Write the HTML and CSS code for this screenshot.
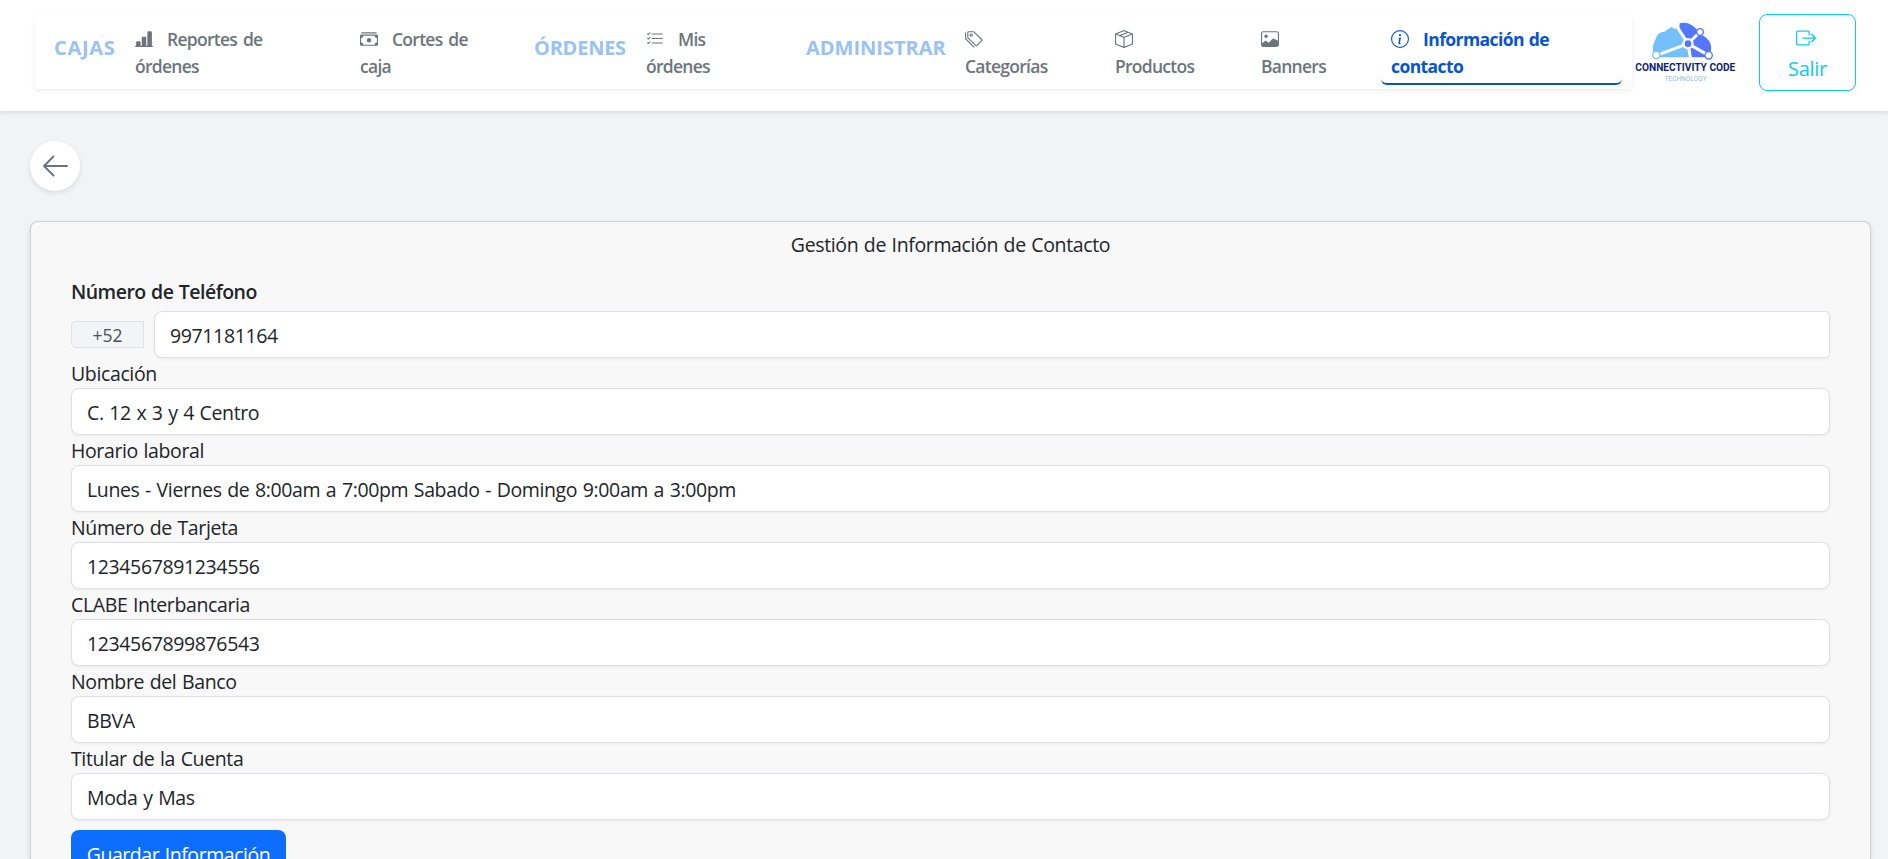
FILE: index.html
```html
<!DOCTYPE html>
<html lang="es">
<head>
<meta charset="utf-8">
<title>Información de contacto</title>
<link rel="stylesheet" href="styles.css">
</head>
<body>
<header class="topbar">
  <nav class="menu">
    <span class="section s-cajas">CAJAS</span>
    <a class="link"><svg class="ico" viewBox="0 0 16 16"><path d="M11 2a1 1 0 0 1 1-1h2a1 1 0 0 1 1 1v12h.5a.5.5 0 0 1 0 1H.5a.5.5 0 0 1 0-1H1v-3a1 1 0 0 1 1-1h2a1 1 0 0 1 1 1v3h1V7a1 1 0 0 1 1-1h2a1 1 0 0 1 1 1v7h1z"/></svg><span>Reportes de</span><br><span>órdenes</span></a>
    <a class="link"><svg class="ico" viewBox="0 0 16 16"><path d="M1 3a1 1 0 0 1 1-1h12a1 1 0 0 1 1 1zm7 8a2 2 0 1 0 0-4 2 2 0 0 0 0 4"/><path d="M0 5a1 1 0 0 1 1-1h14a1 1 0 0 1 1 1v8a1 1 0 0 1-1 1H1a1 1 0 0 1-1-1zm3 0a2 2 0 0 1-2 2v4a2 2 0 0 1 2 2h10a2 2 0 0 1 2-2V7a2 2 0 0 1-2-2z"/></svg><span>Cortes de</span><br><span>caja</span></a>
    <span class="section s-ordenes">ÓRDENES</span>
    <a class="link"><svg class="ico" viewBox="0 0 16 16"><path d="M5 11.5a.5.5 0 0 1 .5-.5h9a.5.5 0 0 1 0 1h-9a.5.5 0 0 1-.5-.5m0-4a.5.5 0 0 1 .5-.5h9a.5.5 0 0 1 0 1h-9a.5.5 0 0 1-.5-.5m0-4a.5.5 0 0 1 .5-.5h9a.5.5 0 0 1 0 1h-9a.5.5 0 0 1-.5-.5M3.854 2.146a.5.5 0 0 1 0 .708l-1.5 1.5a.5.5 0 0 1-.708 0l-.5-.5a.5.5 0 1 1 .708-.708L2 3.293l1.146-1.147a.5.5 0 0 1 .708 0m0 4a.5.5 0 0 1 0 .708l-1.5 1.5a.5.5 0 0 1-.708 0l-.5-.5a.5.5 0 1 1 .708-.708L2 7.293l1.146-1.147a.5.5 0 0 1 .708 0m0 4a.5.5 0 0 1 0 .708l-1.5 1.5a.5.5 0 0 1-.708 0l-.5-.5a.5.5 0 0 1 .708-.708l.146.147 1.146-1.147a.5.5 0 0 1 .708 0"/></svg><span>Mis</span><br><span>órdenes</span></a>
    <span class="section s-admin">ADMINISTRAR</span>
    <a class="link"><svg class="ico" viewBox="0 0 16 16"><path d="M3 2v4.586l7 7L14.586 9l-7-7zM2 2a1 1 0 0 1 1-1h4.586a1 1 0 0 1 .707.293l7 7a1 1 0 0 1 0 1.414l-4.586 4.586a1 1 0 0 1-1.414 0l-7-7A1 1 0 0 1 2 6.586z"/><path d="M5.5 5a.5.5 0 1 1 0-1 .5.5 0 0 1 0 1m0 1a1.5 1.5 0 1 0 0-3 1.5 1.5 0 0 0 0 3M1 7.086a1 1 0 0 0 .293.707L8.75 15.25l-.043.043a1 1 0 0 1-1.414 0l-7-7A1 1 0 0 1 0 7.586V3a1 1 0 0 1 1-1z"/></svg><br><span>Categorías</span></a>
    <a class="link"><svg class="ico" viewBox="0 0 16 16"><path d="M8.186 1.113a.5.5 0 0 0-.372 0L1.846 3.5l2.404.961L10.404 2zm3.564 1.426L5.596 5 8 5.961 14.154 3.5zm3.25 1.7-6.5 2.6v7.922l6.5-2.6V4.24zM7.5 14.762V6.838L1 4.239v7.923zM7.443.184a1.5 1.5 0 0 1 1.114 0l7.129 2.852A.5.5 0 0 1 16 3.5v8.662a1 1 0 0 1-.629.928l-7.185 2.874a.5.5 0 0 1-.372 0L.63 13.09a1 1 0 0 1-.63-.928V3.5a.5.5 0 0 1 .314-.464z"/></svg><br><span>Productos</span></a>
    <a class="link"><svg class="ico" viewBox="0 0 16 16"><path d="M6.002 5.5a1.5 1.5 0 1 1-3 0 1.5 1.5 0 0 1 3 0"/><path d="M2.002 1a2 2 0 0 0-2 2v10a2 2 0 0 0 2 2h12a2 2 0 0 0 2-2V3a2 2 0 0 0-2-2zm12 1a1 1 0 0 1 1 1v6.5l-3.777-1.947a.5.5 0 0 0-.577.093l-3.71 3.71-2.66-1.772a.5.5 0 0 0-.63.062L1.002 12V3a1 1 0 0 1 1-1z"/></svg><br><span>Banners</span></a>
    <a class="link active"><svg class="ico" viewBox="0 0 16 16"><path d="M8 15A7 7 0 1 1 8 1a7 7 0 0 1 0 14m0 1A8 8 0 1 0 8 0a8 8 0 0 0 0 16"/><path d="m8.93 6.588-2.29.287-.082.38.45.083c.294.07.352.176.288.469l-.738 3.468c-.194.897.105 1.319.808 1.319.545 0 1.178-.252 1.465-.598l.088-.416c-.2.176-.492.246-.686.246-.275 0-.375-.193-.304-.533zM9 4.5a1 1 0 1 1-2 0 1 1 0 0 1 2 0"/></svg><span>Información de</span><br><span>contacto</span></a>
  </nav>
  <svg class="logo" viewBox="21 0 339 225">
    <path fill="#74c0ff" d="M92 127C78 112 84 84 92 72C97 56 106 50 118 51C122 46 134 40 140 35L146 42L157 39L184 84L193 127Z"/>
    <path fill="#5477ff" d="M164 25C176 20 200 24 214 42L228 60C250 66 264 90 257 110L246 127H198L190 95L186 76L163 40Z"/>
    <path fill="none" stroke="#fff" stroke-width="9" d="M154 32L189 86L197 131M189 86L95 121M189 86L225 51M189 86L251 121"/>
    <circle cx="189" cy="86" r="17" fill="#fff"/><circle cx="189" cy="86" r="10" fill="#5477ff"/>
    <g fill="#fff" stroke-width="4"><circle cx="94" cy="120" r="11" stroke="#74c0ff"/><circle cx="225" cy="51" r="10" stroke="#5477ff"/><circle cx="251" cy="121" r="11" stroke="#5477ff"/></g>
    <text class="brand" x="31" y="167" textLength="300" lengthAdjust="spacingAndGlyphs">CONNECTIVITY CODE</text>
    <text class="tagline" x="119" y="198" textLength="125" lengthAdjust="spacingAndGlyphs">TECHNOLOGY</text>
  </svg>
  <button class="exit"><svg class="exit-ico" viewBox="0 0 16 16"><path d="M10 12.5a.5.5 0 0 1-.5.5h-8a.5.5 0 0 1-.5-.5v-9a.5.5 0 0 1 .5-.5h8a.5.5 0 0 1 .5.5v2a.5.5 0 0 0 1 0v-2A1.5 1.5 0 0 0 9.5 2h-8A1.5 1.5 0 0 0 0 3.5v9A1.5 1.5 0 0 0 1.5 14h8a1.5 1.5 0 0 0 1.5-1.5v-2a.5.5 0 0 0-1 0z"/><path d="M15.854 8.354a.5.5 0 0 0 0-.708l-3-3a.5.5 0 0 0-.708.708L14.293 7.5H5.5a.5.5 0 0 0 0 1h8.793l-2.147 2.146a.5.5 0 0 0 .708.708z"/></svg><span>Salir</span></button>
</header>
<main class="page">
  <button class="back" aria-label="Volver"><svg class="back-ico" viewBox="0 0 26 22"><path d="M25 11H2M11.500 1.500L2 11l9.500 9.500"/></svg></button>
  <section class="card">
    <h1 class="title"><span>Gestión de Información de Contacto</span></h1>
    <label class="label strong"><span>Número de Teléfono</span></label>
    <div class="phone"><span class="prefix">+52</span><div class="field num phone-field"><span>9971181164</span></div></div>
    <label class="label"><span>Ubicación</span></label>
    <div class="field"><span>C. 12 x 3 y 4 Centro</span></div>
    <label class="label"><span>Horario laboral</span></label>
    <div class="field"><span>Lunes - Viernes de 8:00am a 7:00pm Sabado - Domingo 9:00am a 3:00pm</span></div>
    <label class="label"><span>Número de Tarjeta</span></label>
    <div class="field num"><span>1234567891234556</span></div>
    <label class="label"><span>CLABE Interbancaria</span></label>
    <div class="field num"><span>1234567899876543</span></div>
    <label class="label"><span>Nombre del Banco</span></label>
    <div class="field"><span>BBVA</span></div>
    <label class="label"><span>Titular de la Cuenta</span></label>
    <div class="field"><span>Moda y Mas</span></div>
    <button class="save">Guardar Información</button>
  </section>
</main>
</body>
</html>
```
FILE: styles.css
```css
* { box-sizing: border-box; }
body {
  margin: 0;
  height: 859px;
  overflow: hidden;
  background: #f2f3f5;
  color: #212529;
  font: 400 19.5px/30px "Open Sans", "Noto Sans", sans-serif;
  letter-spacing: -0.37px;
  word-spacing: .9px;
}
button { font: inherit; letter-spacing: inherit; word-spacing: inherit; }
.topbar {
  height: 111px;
  padding: 14px 0 0 35px;
  display: flex;
  align-items: flex-start;
  background: #fff;
  box-shadow: 0 2px 5px rgba(0, 0, 0, .1);
}
.menu {
  width: 1597px;
  flex: none;
  height: 73px;
  margin-top: 2px;
  padding: 0 10px 0 19px;
  display: grid;
  grid-template-columns: 81px 225px 174px 112px 160px 159px 150px 146px 120px 241px;
  box-shadow: 0 2px 5px rgba(0, 0, 0, .07);
}
.section {
  padding-top: 17px;
  color: #99c2f5;
  font-weight: 700;
  font-size: 20px;
  letter-spacing: 0;
  white-space: nowrap;
}
.s-cajas { letter-spacing: .7px; }
.s-ordenes { letter-spacing: -.25px; }
.s-admin { letter-spacing: 0; }
.link {
  height: 69px;
  padding-top: 10px;
  color: #6c757d;
  font-size: 17.5px;
  line-height: 27px;
  font-weight: 600;
  letter-spacing: -.73px;
  word-spacing: 2px;
  white-space: nowrap;
}
.link.active {
  padding-left: 10px;
  color: #0654d0;
  font-weight: 700;
  letter-spacing: -.58px;
  word-spacing: 1px;
  border-bottom: 2px solid #0654d0;
  border-radius: 6px;
}
.ico {
  width: 18px;
  height: 18px;
  margin-right: 14px;
  vertical-align: -1.5px;
  fill: currentColor;
}
.logo { width: 113px; height: 75px; margin-top: 1px; flex: none; }
.brand { font: 700 33px Roboto, sans-serif; letter-spacing: 0; word-spacing: 0; fill: #101f72; }
.tagline { font: 400 21px Roboto, sans-serif; letter-spacing: 0; fill: #8fbdd6; }
.exit {
  width: 97px;
  height: 77px;
  margin-left: 14px;
  padding: 7px 0 0;
  display: flex;
  flex: none;
  flex-direction: column;
  align-items: center;
  border: 1px solid #0dcaf0;
  border-radius: 8px;
  background: #fff;
  color: #0dcaf0;
  font-size: 20px;
  letter-spacing: -.3px;
}
.exit-ico { width: 20px; height: 20px; margin: 6px 4px 6px 0; flex: none; fill: currentColor; }
.page { padding: 30px 17px 0 30px; }
.back {
  width: 50px;
  height: 50px;
  padding: 0;
  display: flex;
  align-items: center;
  justify-content: center;
  border: 0;
  border-radius: 50%;
  background: #fff;
  box-shadow: 0 2px 5px rgba(0, 0, 0, .1);
}
.back-ico { width: 26px; height: 22px; margin-right: 1px; fill: none; stroke: #6b7280; stroke-width: 1.9; stroke-linecap: round; stroke-linejoin: round; }
.card {
  height: 638px;
  margin-top: 30px;
  padding: 8px 40px 0;
  border: 1px solid #cfd0d1;
  border-bottom: 0;
  border-radius: 8px 8px 0 0;
  background: #f8f8f8;
  box-shadow: 0 2px 5px rgba(0, 0, 0, .1);
}
.title { margin: 0 0 17px; font: inherit; text-align: center; }
.label { display: block; height: 30px; line-height: 32px; }
.strong { margin-bottom: 4px; line-height: 30px; font-weight: 600; letter-spacing: -.53px; }
.field {
  height: 47px;
  padding: 9px 15px 0;
  border: 1px solid #dee0e6;
  border-radius: 8px;
  background: #fff;
  line-height: 30px;
  box-shadow: 0 1px 3px rgba(0, 0, 0, .06);
}
.num { letter-spacing: -.37px; }
.phone { display: flex; align-items: center; gap: 10px; }
.phone-field { flex: 1; border-radius: 8px 5px 5px 8px; }
.prefix {
  width: 73px;
  height: 27px;
  margin-top: -1px;
  border: 1px solid #dee2e6;
  border-radius: 5px 0 0 5px;
  background: #f3f4f6;
  color: #495057;
  font-size: 17.5px;
  letter-spacing: 0;
  line-height: 27px;
  text-align: center;
}
.save {
  width: 215px;
  height: 47px;
  margin-top: 10px;
  padding: 2px 0 0;
  border: 0;
  border-radius: 8px;
  background: #0d6efd;
  color: #fff;
  letter-spacing: -.45px;
}
```
